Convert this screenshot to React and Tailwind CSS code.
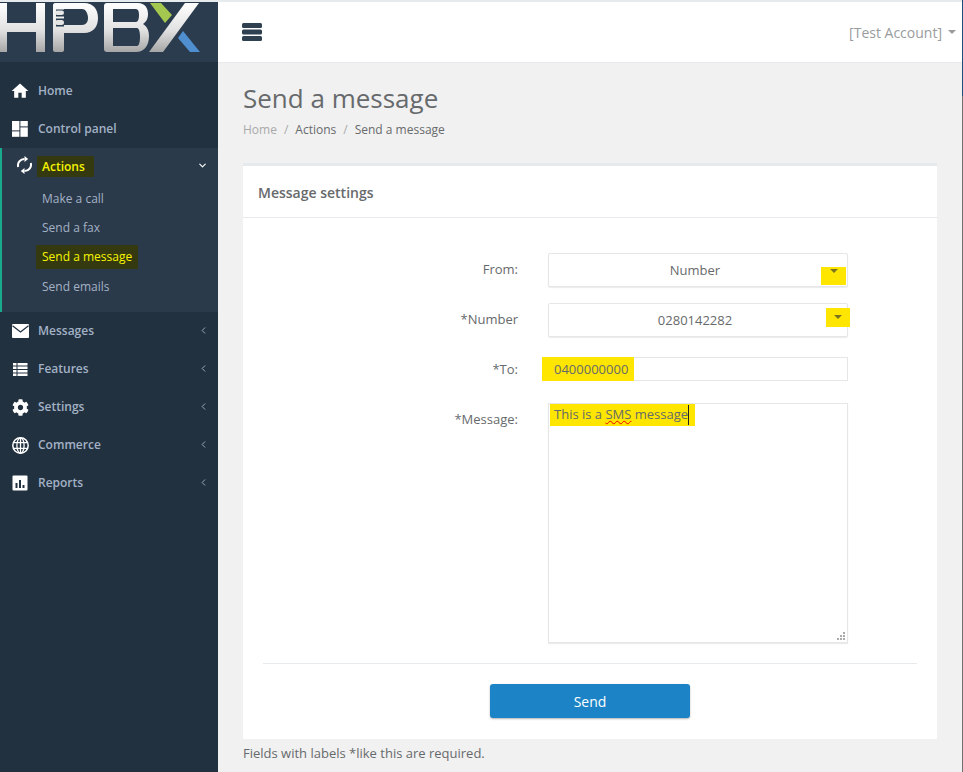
import React from "react";
import { FaCog } from "react-icons/fa";
import { MdHome } from "react-icons/md";
import { ChevronLeft, ChevronDown } from "lucide-react";

const font = { fontFamily: '"Open Sans", sans-serif' };

const Logo = () => (
  <svg width="218" height="62" viewBox="0 0 218 62" className="block -mt-[2px]">
    <defs>
      <linearGradient id="chrome" gradientUnits="userSpaceOnUse" x1="0" y1="3" x2="0" y2="52">
        <stop offset="0" stopColor="#ffffff" />
        <stop offset="0.55" stopColor="#e2e2e2" />
        <stop offset="1" stopColor="#a6a6a6" />
      </linearGradient>
    </defs>
    <g fill="url(#chrome)" fillRule="evenodd">
      <path d="M0 3h7v20h29V3h9v49h-9V32H7v20H0z" />
      <path d="M55 3h29c10 0 14 7 14 15s-4 15-14 15H64v17c0 1-1 2-2 2h-7c-1 0-2-1-2-2V5c0-1 1-2 2-2zM64 9v16h18c4 0 6-3 6-7s-2-9-6-9z" />
      <path d="M107 3h31c7 0 10 5 10 11 0 5-2 8-5 10 3 2 6 5 6 12 0 10-5 16-13 16h-29c-2 0-3-1-3-3V6c0-2 1-3 3-3zm6 6v13h23c2 0 3-3 3-7s-1-6-3-6zm0 19v18h24c2 0 3-4 3-9s-1-9-3-9z" />
      <path d="M185 3h14l-36 49h-14z" />
    </g>
    <path d="M56 9.5h8v7h-8zM56 18.5h8v8h-8z" fill="#2b3c4e" />
    <rect x="55" y="10.5" width="9" height="4.5" rx="2.2" fill="#e8e8e8" />
    <rect x="55" y="20" width="9" height="5" rx="2.5" fill="#e4e4e4" />
    <path d="M150 3h11l11 12-7 8z" fill="#a4c74f" />
    <path d="M183 31l17 21h-10l-12-14z" fill="#4f8fd0" />
  </svg>
);

const DashIcon = () => (
  <svg width="16" height="16" viewBox="0 0 16 16" fill="#fff">
    <rect x="0" y="0" width="7.4" height="9.4" />
    <rect x="8.4" y="0" width="7.4" height="5.4" />
    <rect x="0" y="10.4" width="7.4" height="5.4" />
    <rect x="8.4" y="6.4" width="7.4" height="9.4" />
  </svg>
);

const SyncIcon = () => (
  <svg width="15" height="18" viewBox="0 0 15 18" fill="none">
    <path d="M1.2 11A6.4 6.4 0 0 1 7.5 3" stroke="#fff" strokeWidth="2" />
    <path d="M13.8 7A6.4 6.4 0 0 1 7.5 15" stroke="#fff" strokeWidth="2" />
    <polygon points="7.5,0 11.2,3 7.5,6" fill="#fff" />
    <polygon points="7.5,12 3.8,15 7.5,18" fill="#fff" />
  </svg>
);

const MailIcon = () => (
  <svg width="17" height="14" viewBox="0 0 17 14">
    <rect x="0" y="0" width="17" height="14" rx="1" fill="#fff" />
    <path d="M0.5 1.8L8.5 8l8-6.2" fill="none" stroke="#22313f" strokeWidth="1.3" />
  </svg>
);

const ListIcon = () => (
  <svg width="16" height="13" viewBox="0 0 16 13" fill="#fff">
    <rect x="1" y="0" width="3.5" height="2.5" />
    <rect x="1" y="3.5" width="3.5" height="2.5" />
    <rect x="1" y="7" width="3.5" height="2.5" />
    <rect x="1" y="10.5" width="3.5" height="2.5" />
    <rect x="5.5" y="0" width="10" height="2.5" />
    <rect x="5.5" y="3.5" width="10" height="2.5" />
    <rect x="5.5" y="7" width="10" height="2.5" />
    <rect x="5.5" y="10.5" width="10" height="2.5" />
  </svg>
);

const GlobeIcon = () => (
  <svg width="17" height="17" viewBox="0 0 17 17" fill="none" stroke="#fff" strokeWidth="1.3">
    <circle cx="8.5" cy="8.5" r="7.7" strokeWidth="1.5" />
    <ellipse cx="8.5" cy="8.5" rx="3.6" ry="7.7" />
    <path d="M1.5 5.6h14M1.5 11.4h14M8.5 1v15" />
  </svg>
);

const ReportIcon = () => (
  <svg width="16" height="16" viewBox="0 0 16 16">
    <rect x="0.5" y="0.5" width="15" height="15" rx="1" fill="#fff" />
    <rect x="3.5" y="8" width="2" height="5" fill="#22313f" />
    <rect x="7" y="5" width="2" height="8" fill="#22313f" />
    <rect x="10.5" y="10" width="2" height="3" fill="#22313f" />
  </svg>
);

const BarsIcon = () => (
  <svg width="20" height="18" viewBox="0 0 20 18" fill="#2f4050">
    <rect x="0" y="0" width="20" height="5" rx="1.5" />
    <rect x="0" y="6.5" width="20" height="5" rx="1.5" />
    <rect x="0" y="13" width="20" height="5" rx="1.5" />
  </svg>
);

const NavItem = ({ icon, label, arrow = true }) => (
  <div className="h-[38px] flex items-center pl-3 pr-[9px]">
    <span className="w-[26px] flex items-center text-white">{icon}</span>
    <span className="flex-1 text-[12px] font-semibold text-[#a3b1c6]">{label}</span>
    {arrow && <ChevronLeft className="text-[#a3b1c6] -mt-[2px]" size={11} strokeWidth={2} />}
  </div>
);

const SubItem = ({ label, mark }) => (
  <div className="h-[29.3px] flex items-center pl-[40px]">
    {mark ? (
      <span className="text-[12px] text-[#f5f500] bg-[#35390f] -mx-[6px] px-[6px] py-[3px]">{label}</span>
    ) : (
      <span className="text-[12px] text-[#a3b1c6]">{label}</span>
    )}
  </div>
);

const Row = ({ label, children, className = "", labelClass = "pt-[7px]" }) => (
  <div className={`flex ${className}`}>
    <label className={`w-[285px] text-right text-[13px] text-[#676a6c] pr-[30px] ${labelClass}`}>{label}</label>
    <div className="w-[300px]">{children}</div>
  </div>
);

const SelectBox = ({ value, markClass }) => (
  <div className="relative h-[34px] bg-white border border-[#e5e6e7] rounded-[2px] shadow-[0_1px_1px_rgba(0,0,0,0.08)] flex items-center justify-center pr-[6px] pt-[2px] text-[13px] text-[#676a6c]">
    {value}
    <span className={`absolute flex justify-center bg-[#ffe600] ${markClass}`}>
      <span className="w-0 h-0 border-x-[4px] border-x-transparent border-t-[4px] border-t-[#7a7420]" />
    </span>
  </div>
);

export default function App() {
  return (
    <div style={font} className="w-[963px] h-[772px] flex overflow-hidden bg-[#f1f1f1]">
      <aside className="w-[218px] shrink-0 bg-[#22313f]">
        <div className="h-[62px] bg-[#2b3c4e] border-t-2 border-[#e7eaec] overflow-hidden">
          <Logo />
        </div>
        <nav className="pt-[10px]">
          <NavItem icon={<MdHome size={20} className="-ml-[2px]" />} label="Home" arrow={false} />
          <NavItem icon={<DashIcon />} label="Control panel" arrow={false} />
          <div className="h-[164px] bg-[#2b3a4a] border-l-2 border-[#19aa8d]">
            <div className="h-[34px] mb-[2px] flex items-center pl-[15px] pr-[10px]">
              <SyncIcon />
              <span className="flex-1 ml-[5px]">
                <span className="text-[12px] font-semibold text-[#f5f500] bg-[#35390f] pl-[5px] pr-[9px] py-[2px]">Actions</span>
              </span>
              <ChevronDown className="text-white" size={11} strokeWidth={2.5} />
            </div>
            <SubItem label="Make a call" />
            <SubItem label="Send a fax" />
            <SubItem label="Send a message" mark />
            <SubItem label="Send emails" />
          </div>
          <NavItem icon={<MailIcon />} label="Messages" />
          <NavItem icon={<ListIcon />} label="Features" />
          <NavItem icon={<FaCog size={17} />} label="Settings" />
          <NavItem icon={<GlobeIcon />} label="Commerce" />
          <NavItem icon={<ReportIcon />} label="Reports" />
        </nav>
      </aside>

      <main className="flex-1 min-w-0">
        <header className="h-[63px] bg-white border-t-2 border-b border-[#e7eaec] flex items-center justify-between pl-[24px] pr-[6px]">
          <BarsIcon />
          <div className="flex items-center text-[14px] text-[#999c9e] gap-[6px]">
            [Test Account]
            <span className="w-0 h-0 border-x-[4px] border-x-transparent border-t-[4px] border-t-[#999c9e]" />
          </div>
        </header>

        <div className="pl-[25px] pr-[25px]">
          <h1 className="text-[26px] leading-[30px] text-[#676a6c] mt-[20px]">Send a message</h1>
          <div className="flex items-center text-[12px] leading-[18px] mt-[8px] text-[#676a6c]">
            <span className="text-[#a9a9a9]">Home</span>
            <span className="mx-[7px] text-[#a9a9a9]">/</span>
            <span>Actions</span>
            <span className="mx-[7px] text-[#a9a9a9]">/</span>
            <span>Send a message</span>
          </div>

          <section className="mt-[24px] bg-white border-t-[3px] border-[#e7eaec]">
            <div className="h-[52px] flex items-center px-[15px] pt-[2px] border-b border-[#e7eaec]">
              <h2 className="text-[14px] font-semibold text-[#676a6c]">Message settings</h2>
            </div>
            <div className="px-[20px] pt-[35px] pb-[21px]">
              <Row label="From:">
                <SelectBox value="Number" markClass="left-[272px] top-[13px] w-[25px] h-[18px] pt-[2px]" />
              </Row>
              <Row label="*Number" className="mt-[16px]">
                <SelectBox value="0280142282" markClass="left-[277px] top-[4px] w-[24px] h-[19px] pt-[7px]" />
              </Row>
              <Row label="*To:" className="mt-[20px]" labelClass="pt-[3px]">
                <div className="h-[24px] border border-[#e5e6e7] flex items-center text-[13px] text-[#676a6c] pl-[5px]">
                  <span className="bg-[#ffe600] -ml-[12px] pl-[12px] pr-[6px] pt-[3px] pb-[1px]">0400000000</span>
                </div>
              </Row>
              <Row label="*Message:" className="mt-[22px]">
                <div className="relative h-[240px] border border-[#e5e6e7] shadow-[0_1px_1px_rgba(0,0,0,0.08)] text-[13px] text-[#676a6c] pl-[5px]">
                  <span className="inline-flex bg-[#ffe600] pl-[4px] -ml-[4px] pr-[6px] py-[1px]">
                    <span className="border-r border-[#222]">
                      This is a <span className="underline decoration-wavy decoration-[#e00] decoration-1">SMS</span> message
                    </span>
                  </span>
                  <svg className="absolute right-[2px] bottom-[2px]" width="9" height="9" viewBox="0 0 9 9" fill="#aaa">
                    <rect x="7" y="1" width="2" height="2" />
                    <rect x="4" y="4" width="2" height="2" />
                    <rect x="7" y="4" width="2" height="2" />
                    <rect x="1" y="7" width="2" height="2" />
                    <rect x="4" y="7" width="2" height="2" />
                    <rect x="7" y="7" width="2" height="2" />
                  </svg>
                </div>
              </Row>
              <div className="h-px bg-[#e7eaec] mt-[20px]" />
              <div className="flex justify-center mt-[20px]">
                <button className="w-[200px] h-[34px] bg-[#1c84c6] text-white text-[14px] rounded-[3px] shadow-[0_1px_2px_rgba(0,0,0,0.3)]">Send</button>
              </div>
            </div>
          </section>
          <p className="text-[13px] text-[#676a6c] mt-[5px]">Fields with labels *like this are required.</p>
        </div>
      </main>
      <div className="w-px shrink-0 flex flex-col">
        <div className="h-[96px] bg-[#1c4f7c]" />
        <div className="flex-1 bg-[#707070]" />
      </div>
    </div>
  );
}
